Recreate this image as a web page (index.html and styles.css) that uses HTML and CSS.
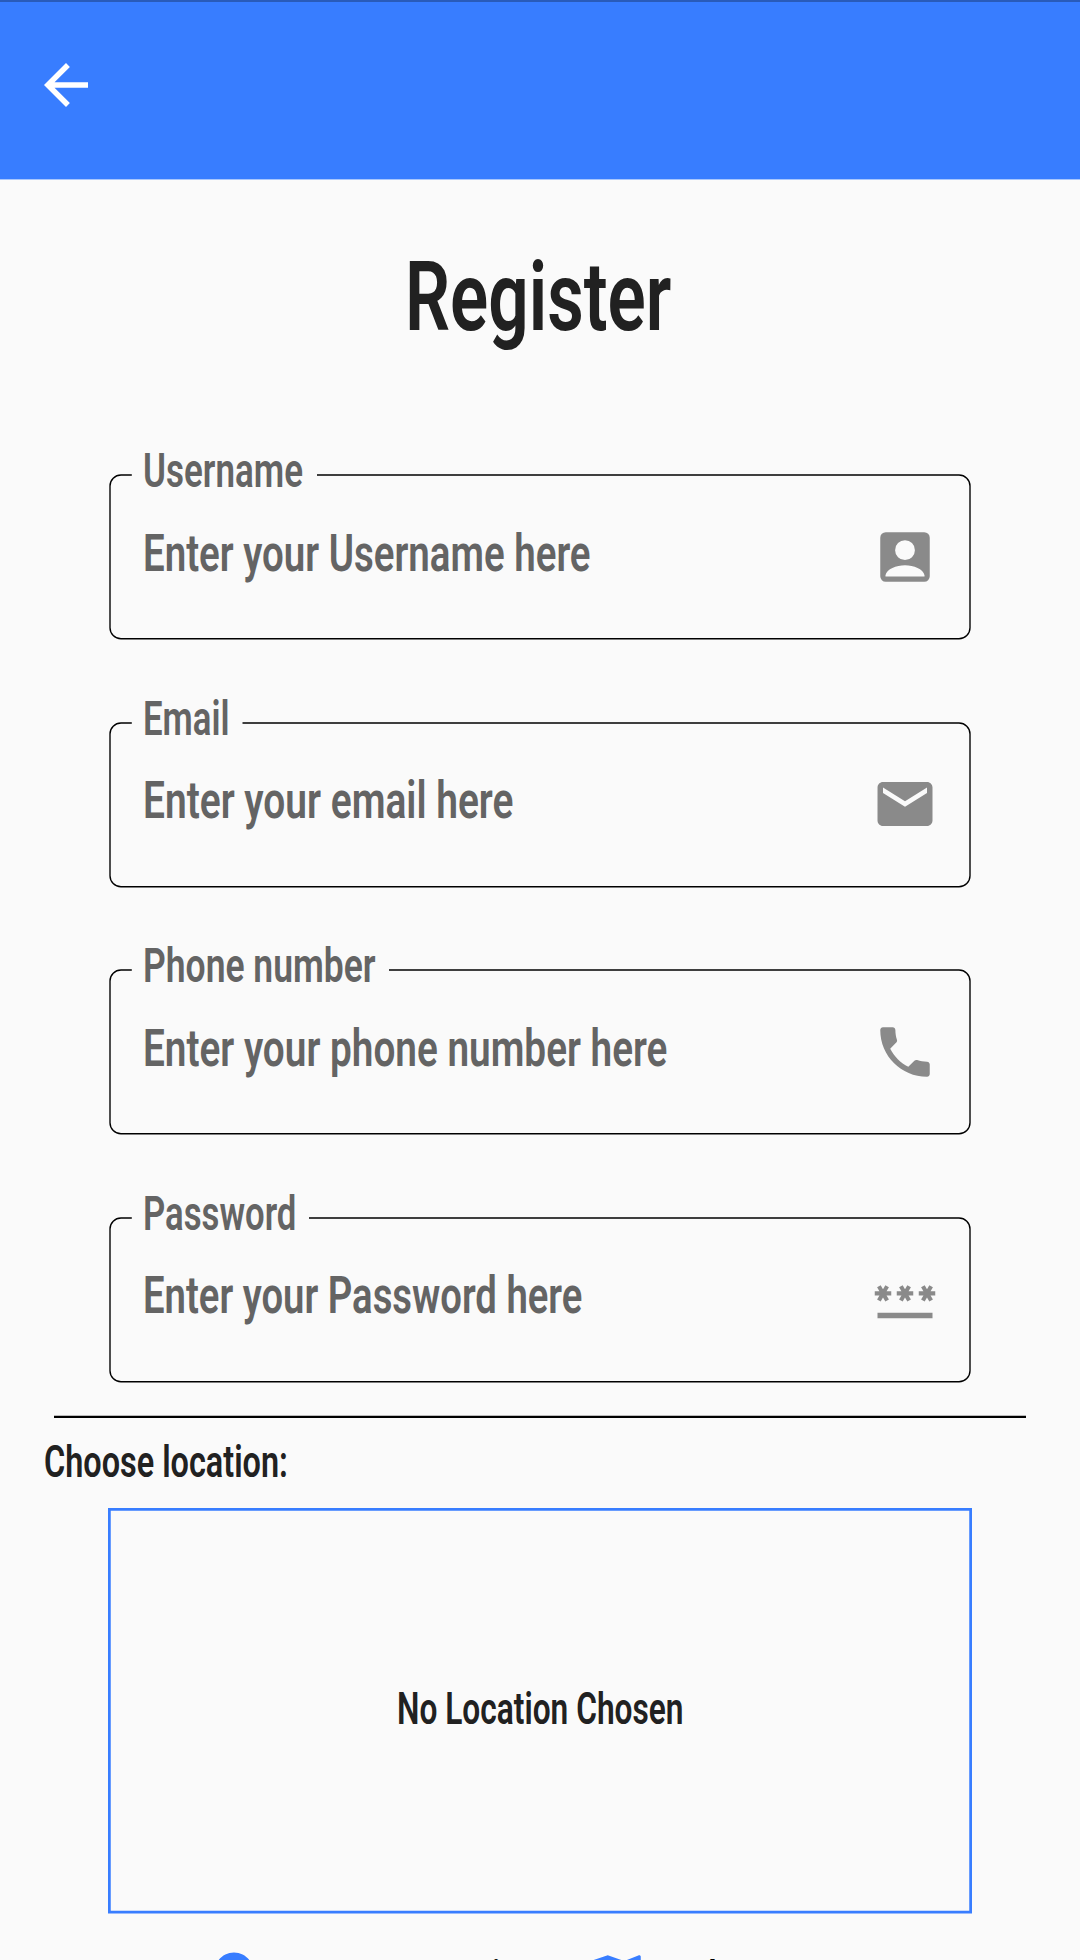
FILE: index.html
```html
<!DOCTYPE html>
<html lang="en">
<head>
<meta charset="utf-8">
<title>Register</title>
<link rel="stylesheet" href="styles.css">
</head>
<body>
<header class="app-bar">
  <svg class="icon back" viewBox="0 0 24 24"><path d="M20 11H7.83l5.59-5.59L12 4l-8 8 8 8 1.41-1.41L7.83 13H20v-2z"/></svg>
</header>
<main class="page">
  <h1 class="title"><span class="condensed">Register</span></h1>

  <form class="fields">
    <div class="field username">
      <svg class="outline" viewBox="0 0 860 163.75"><path d="M207 0H849a11 11 0 0 1 11 11V152.75a11 11 0 0 1-11 11H11a11 11 0 0 1-11-11V11A11 11 0 0 1 11 0H21.8"/></svg>
      <label class="label condensed">Username</label>
      <span class="hint condensed">Enter your Username here</span>
      <svg class="icon" viewBox="0 0 24 24"><path fill-rule="evenodd" d="M5 3h14a2 2 0 0 1 2 2v14a2 2 0 0 1-2 2H5a2 2 0 0 1-2-2V5a2 2 0 0 1 2-2zM12 5.9a3.6 3.6 0 1 0 0 7.2a3.6 3.6 0 0 0 0-7.2zM4.9 19.1h14.2v-.5C18.6 16.4 15.2 15 12 15s-6.6 1.4-7.1 3.6z"/></svg>
    </div>
    <div class="field email">
      <svg class="outline" viewBox="0 0 860 163.75"><path d="M132.5 0H849a11 11 0 0 1 11 11V152.75a11 11 0 0 1-11 11H11a11 11 0 0 1-11-11V11A11 11 0 0 1 11 0H21.8"/></svg>
      <label class="label condensed">Email</label>
      <span class="hint condensed">Enter your email here</span>
      <svg class="icon" viewBox="0 0 24 24"><path d="M20 4H4c-1.1 0-1.99.9-1.99 2L2 18c0 1.1.9 2 2 2h16c1.1 0 2-.9 2-2V6c0-1.1-.9-2-2-2zm0 4l-8 5-8-5V6l8 5 8-5v2z"/></svg>
    </div>
    <div class="field phone">
      <svg class="outline" viewBox="0 0 860 163.75"><path d="M279 0H849a11 11 0 0 1 11 11V152.75a11 11 0 0 1-11 11H11a11 11 0 0 1-11-11V11A11 11 0 0 1 11 0H21.8"/></svg>
      <label class="label condensed">Phone number</label>
      <span class="hint condensed">Enter your phone number here</span>
      <svg class="icon" viewBox="0 0 24 24"><path d="M20 15.5c-1.25 0-2.45-.2-3.57-.57-.35-.11-.74-.03-1.02.24l-2.2 2.2c-2.83-1.44-5.15-3.75-6.59-6.59l2.2-2.21c.28-.26.36-.65.25-1C8.7 6.45 8.5 5.25 8.500 4c0-.55-.45-1-1-1H4c-.55 0-1 .45-1 1 0 9.390 7.610 17 17 17 .55 0 1-.45 1-1v-3.500c0-.55-.45-1-1-1z"/></svg>
    </div>
    <div class="field password">
      <svg class="outline" viewBox="0 0 860 163.75"><path d="M199 0H849a11 11 0 0 1 11 11V152.75a11 11 0 0 1-11 11H11a11 11 0 0 1-11-11V11A11 11 0 0 1 11 0H21.8"/></svg>
      <label class="label condensed">Password</label>
      <span class="hint condensed">Enter your Password here</span>
      <svg class="icon" viewBox="0 0 24 24"><path d="M2 17h20v2H2v-2zm1.150-4.050L4 11.470l.85 1.480 1.300-.75-.85-1.480H7v-1.500H5.300l.85-1.470L4.850 7 4 8.470 3.150 7l-1.300.75.85 1.470H1v1.500h1.700l-.85 1.480 1.300.75zm6.700-.75l1.300.75.85-1.480.85 1.480 1.300-.75-.85-1.480H15v-1.500h-1.700l.85-1.470-1.300-.75L12 8.470 11.150 7l-1.300.75.85 1.470H9v1.500h1.700l-.85 1.480zM23 9.220h-1.700l.85-1.470-1.300-.75L20 8.470 19.150 7l-1.300.75.85 1.470H17v1.500h1.700l-.85 1.480 1.300.75.85-1.480.85 1.480 1.300-.75-.85-1.480H23v-1.500z"/></svg>
    </div>
  </form>

  <svg class="divider" viewBox="0 0 972 3"><path d="M0 .8H972V3H0z"/></svg>
  <h2 class="location-heading"><span class="condensed">Choose location:</span></h2>
  <section class="location-box">
    <svg class="outline" viewBox="0 0 864 405.5"><path d="M1.375 1.375H862.625V404.125H1.375z"/></svg>
    <span class="location-text condensed">No Location Chosen</span>
  </section>

  <div class="actions">
    <button class="action current" type="button">
      <svg class="icon" viewBox="0 0 24 24"><path d="M12 2C8.130 2 5 5.130 5 9c0 5.250 7 13 7 13s7-7.750 7-13c0-3.870-3.130-7-7-7zm0 9.500a2.500 2.500 0 0 1 0-5 2.500 2.500 0 0 1 0 5z"/></svg>
      <span class="condensed">Current Location</span>
    </button>
    <button class="action map" type="button">
      <svg class="icon" viewBox="0 0 24 24"><path d="M20.500 3l-.16.030L15 5.100 9 3 3.360 4.900c-.21.070-.36.250-.36.480V20.500c0 .28.220.5.500.5l.16-.03L9 18.900l6 2.100 5.640-1.900c.21-.07.36-.25.36-.48V3.500c0-.28-.22-.5-.5-.5zM15 19l-6-2.110V5l6 2.110V19z"/></svg>
      <span class="condensed">Select on Map</span>
    </button>
  </div>
</main>
</body>
</html>
```
FILE: styles.css
```css
* {
  box-sizing: border-box;
}

html,
body {
  margin: 0;
  height: 1960px;
  overflow: hidden;
}

body {
  background: #fafafa;
  color: #212121;
  font-family: Roboto, "Liberation Sans", sans-serif;
  font-weight: 600;
}

.condensed {
  display: inline-block;
  white-space: nowrap;
  transform: scaleX(var(--squeeze, 0.737));
  transform-origin: 0 50%;
}

.icon {
  display: block;
  flex: none;
  width: 66px;
  height: 66px;
  fill: currentColor;
}

.app-bar {
  height: 180px;
  padding: 50px 33px 0;
  border-top: 2px solid #295bb9;
  background: linear-gradient(#387dff 177px, #a9c7fd 177px);
  color: #fff;
}

.title {
  --squeeze: 0.732;
  height: 100px;
  margin: 67px 0 0;
  padding-left: 405px;
  font-size: 97px;
  font-weight: 650;
  line-height: 100px;
}

.fields {
  display: flex;
  flex-direction: column;
  gap: 83.75px;
  margin: 128px 110px 0;
}

.field {
  position: relative;
  display: flex;
  align-items: center;
  justify-content: space-between;
  height: 163.75px;
  padding: 0 32px 0 32.5px;
  color: #646464;
}

.field .icon {
  color: #8a8a8a;
}

.outline {
  position: absolute;
  inset: 0;
  width: 100%;
  height: 100%;
  overflow: visible;
  fill: none;
  stroke: #000;
  stroke-width: 1.375px;
}

.label {
  position: absolute;
  left: 32.5px;
  top: -33.7px;
  font-size: 48px;
  line-height: 60px;
}

.hint {
  margin-top: -6.4px;
  font-size: 52px;
  line-height: 60px;
}

.username .label { --squeeze: 0.729; }
.email .label { --squeeze: 0.724; }
.phone .label { --squeeze: 0.739; }
.password .label { --squeeze: 0.723; }

.username .hint { --squeeze: 0.740; }
.email .hint { --squeeze: 0.748; }
.phone .hint { --squeeze: 0.745; }
.password .hint { --squeeze: 0.736; }

.divider {
  display: block;
  width: 972px;
  height: 3px;
  margin: 33.75px 54px 0;
}

.location-heading {
  height: 60px;
  margin: 13.5px 0 0 44px;
  font-size: 44px;
  font-weight: 600;
  line-height: 60px;
}

.location-box {
  position: relative;
  height: 405.5px;
  margin: 16.5px 108px 0;
  padding: 171px 0 0 289px;
}

.location-box .outline {
  stroke: #387dff;
  stroke-width: 2.75px;
}

.location-text {
  --squeeze: 0.720;
  font-size: 44px;
  line-height: 60px;
}

.actions {
  display: flex;
  margin: 33px 0 0 200.5px;
}

.action {
  display: flex;
  gap: 22px;
  width: 382.5px;
  padding: 0;
  border: 0;
  background: none;
  color: #387dff;
  font: 600 44px/60px Roboto, "Liberation Sans", sans-serif;
}

.action span {
  color: #000;
}

.current {
  --squeeze: 0.755;
}
```
